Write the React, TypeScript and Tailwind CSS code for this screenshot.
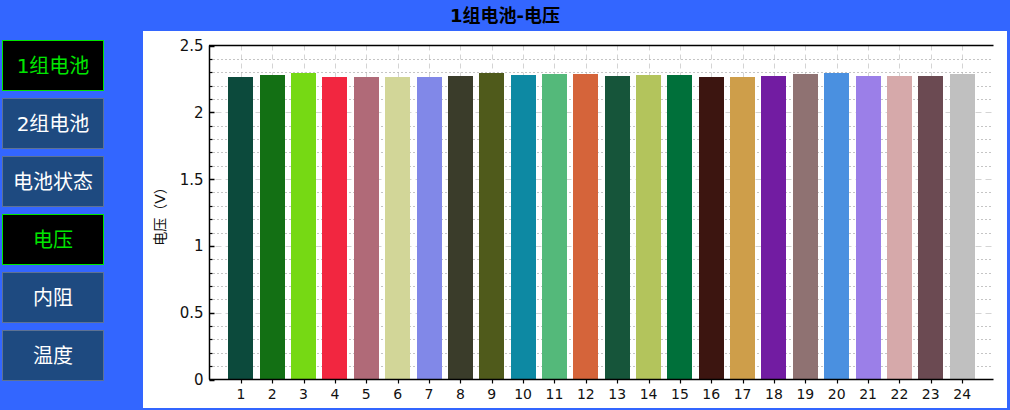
import React from "react";

const FONT = { fontFamily: '"DejaVu Sans", "Noto Sans CJK SC", sans-serif' };

const menu = ["1组电池", "2组电池", "电池状态", "电压", "内阻", "温度"];
const activeItems = ["1组电池", "电压"];

// voltage of each cell + bar colour
const cells: [number, string][] = [
  [2.263, "#0c4a3c"],
  [2.278, "#137014"],
  [2.293, "#76d914"],
  [2.263, "#f22640"],
  [2.263, "#b06a78"],
  [2.263, "#d2d698"],
  [2.263, "#8188e8"],
  [2.27, "#3a3c2a"],
  [2.293, "#4f5a1b"],
  [2.278, "#0d89a3"],
  [2.285, "#54b97a"],
  [2.285, "#d5643a"],
  [2.27, "#16553a"],
  [2.278, "#b3c45c"],
  [2.278, "#00703a"],
  [2.263, "#3c1510"],
  [2.263, "#ce9e4a"],
  [2.27, "#721ca2"],
  [2.285, "#8f7272"],
  [2.293, "#4a90e0"],
  [2.27, "#9b7fe8"],
  [2.27, "#d6a9aa"],
  [2.27, "#6b4a52"],
  [2.285, "#c0c0c0"],
];

// plot box in panel coordinates
const L = 66.5;
const R = 850.5;
const T = 14.5;
const B = 348.5;
const xs = (v: number) => L + ((R - L) * v) / 25;
const ys = (v: number) => B - ((B - T) * v) / 2.5;

function VoltageChart() {
  const minor: number[] = [];
  for (let i = 1; i < 25; i++) if (i % 5 !== 0) minor.push(i / 10);
  const major = [0, 0.5, 1, 1.5, 2, 2.5];

  return (
    <svg width="864" height="377" viewBox="0 0 864 377" style={FONT}>
      {/* vertical grid */}
      {cells.map((_, i) => (
        <line
          key={`v${i}`}
          x1={Math.round(xs(i + 1)) + 0.5}
          x2={Math.round(xs(i + 1)) + 0.5}
          y1={T}
          y2={B}
          stroke="#d4d4d4"
          strokeWidth="1"
          strokeDasharray="5 4"
        />
      ))}
      {/* minor horizontal grid */}
      {minor.map((v) => (
        <line
          key={`m${v}`}
          x1={L + 4}
          x2={R}
          y1={Math.round(ys(v)) + 0.5}
          y2={Math.round(ys(v)) + 0.5}
          stroke="#8a8a8a"
          strokeWidth="1"
          strokeDasharray="1 3"
        />
      ))}
      {/* major horizontal grid */}
      {major.slice(1, 5).map((v) => (
        <line
          key={`M${v}`}
          x1={L + 6}
          x2={R}
          y1={Math.round(ys(v)) + 0.5}
          y2={Math.round(ys(v)) + 0.5}
          stroke="#d4d4d4"
          strokeWidth="1"
          strokeDasharray="6 4"
        />
      ))}

      {/* bars */}
      {cells.map(([v, c], i) => {
        const cx = xs(i + 1);
        return (
          <rect
            key={`b${i}`}
            x={Math.round(cx - 12.5)}
            width="25"
            y={Math.round(ys(v))}
            height={B - Math.round(ys(v))}
            fill={c}
          />
        );
      })}

      {/* axes */}
      <line x1={L - 0.5} x2={R} y1={T} y2={T} stroke="#000" strokeWidth="1.5" />
      <line x1={L - 0.5} x2={R} y1={B} y2={B} stroke="#000" strokeWidth="1.5" />
      <line x1={L} x2={L} y1={T} y2={B} stroke="#000" strokeWidth="1.5" />

      {/* y ticks */}
      {major.map((v) => (
        <g key={`yt${v}`}>
          <line x1={L} x2={L + 5} y1={Math.round(ys(v)) + 0.5} y2={Math.round(ys(v)) + 0.5} stroke="#000" strokeWidth="1.5" />
          <text x={L - 6} y={ys(v) + 5.5} textAnchor="end" fontSize="15" fill="#111">
            {v === 0 ? "0" : String(v)}
          </text>
        </g>
      ))}
      {minor.map((v) => (
        <line key={`ym${v}`} x1={L} x2={L + 3} y1={Math.round(ys(v)) + 0.5} y2={Math.round(ys(v)) + 0.5} stroke="#000" strokeWidth="1.2" />
      ))}

      {/* x ticks */}
      {cells.map((_, i) => (
        <g key={`xt${i}`}>
          <line
            x1={Math.round(xs(i + 1)) + 0.5}
            x2={Math.round(xs(i + 1)) + 0.5}
            y1={B}
            y2={B + 4}
            stroke="#000"
            strokeWidth="1.2"
          />
          <text x={xs(i + 1)} y={B + 19} textAnchor="middle" fontSize="14" fill="#111">
            {i + 1}
          </text>
        </g>
      ))}

      {/* y label */}
      <text
        x="0"
        y="0"
        transform="translate(22 182) rotate(-90)"
        textAnchor="middle"
        fontSize="14"
        fill="#111"
      >
        电压（V）
      </text>
    </svg>
  );
}

export default function App() {
  return (
    <div className="w-[1010px] h-[410px] bg-[#3366ff] flex flex-col overflow-hidden" style={FONT}>
      {/* Title */}
      <div className="h-[31px] flex items-center justify-center text-[18px] font-bold text-black">
        1组电池-电压
      </div>

      <div className="flex flex-1 pb-[2px] pr-[3px]">
        {/* Left menu */}
        <div className="w-[143px] pl-[2px] pt-[9px] flex flex-col gap-[7px]">
          {menu.map((m) => {
            const active = activeItems.includes(m);
            return (
              <div
                key={m}
                className={`w-[102px] h-[51px] flex items-center justify-center text-[20px] border ${
                  active
                    ? "bg-black border-[#00e600] text-[#00e600]"
                    : "bg-[#1e4a80] border-[#5d7294] text-white"
                }`}
              >
                {m}
              </div>
            );
          })}
        </div>

        {/* Chart panel */}
        <div className="flex-1 bg-white">
          <VoltageChart />
        </div>
      </div>
    </div>
  );
}
